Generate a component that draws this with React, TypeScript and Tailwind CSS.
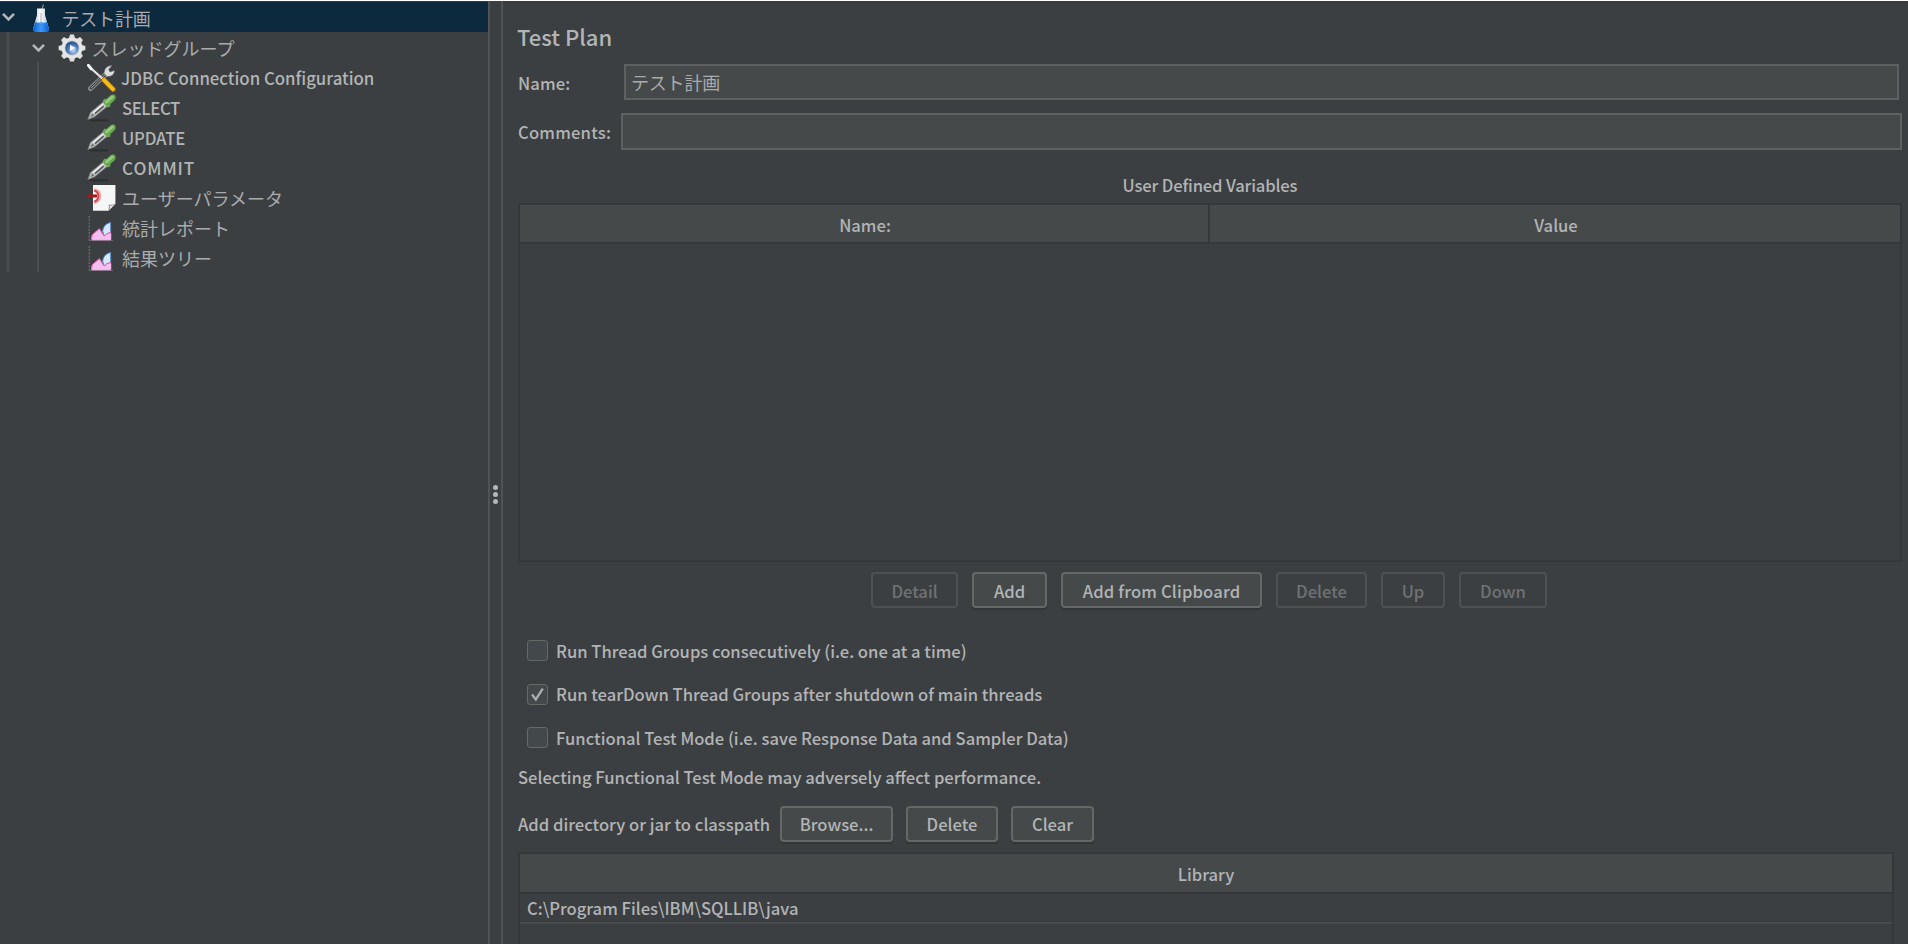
import type { ReactNode } from "react";

const CJK = "font-['Noto_Sans_CJK_JP',sans-serif]";

function Chevron() {
  return (
    <svg width="14" height="10" viewBox="0 0 14 10" className="shrink-0">
      <path d="M1 1.8 L6.5 7.3 L12 1.8" fill="none" stroke="#b4b6b7" strokeWidth="2.6" />
    </svg>
  );
}

function FlaskIcon() {
  return (
    <svg width="18" height="30" viewBox="0 0 18 30" className="shrink-0">
      <defs>
        <linearGradient id="glass" x1="0" x2="1">
          <stop offset="0" stopColor="#a9bac5" />
          <stop offset="0.45" stopColor="#ffffff" />
          <stop offset="1" stopColor="#b3c3ce" />
        </linearGradient>
        <linearGradient id="liquid" x1="0" x2="1">
          <stop offset="0" stopColor="#0b5fd0" />
          <stop offset="0.5" stopColor="#3b9bfb" />
          <stop offset="1" stopColor="#0b5fd0" />
        </linearGradient>
      </defs>
      <path d="M9 10 L11.5 2.5" stroke="#7f8b93" strokeWidth="1.2" />
      <path d="M5 6.5 H13 L13 13 L17 27 Q17 29.5 14.5 29.5 H3.5 Q1 29.5 1 27 L5 13 Z" fill="url(#glass)" />
      <path d="M3.4 20 H14.8 L17 27 Q17 29.7 14.5 29.7 H3.5 Q1 29.7 1 27 Z" fill="url(#liquid)" />
      <path d="M3.8 20 Q9 22 14.4 20" fill="none" stroke="#9cc8f5" strokeWidth="1" />
      <path d="M9 11 V23" stroke="#5f7888" strokeWidth="1" opacity="0.55" />
    </svg>
  );
}

function GearIcon() {
  const teeth = [0, 45, 90, 135, 180, 225, 270, 315];
  return (
    <svg width="28" height="28" viewBox="0 0 28 28" className="shrink-0">
      <defs>
        <radialGradient id="hub" cx="0.6" cy="0.7" r="0.75">
          <stop offset="0" stopColor="#b9d6fa" />
          <stop offset="0.55" stopColor="#4a78bd" />
          <stop offset="1" stopColor="#1d3f7c" />
        </radialGradient>
      </defs>
      {teeth.map((a) => (
        <path key={a} d="M10.8 5 L12 0.6 H16 L17.2 5 Z" fill="#dedfdf" transform={`rotate(${a} 14 14)`} />
      ))}
      <circle cx="14" cy="14" r="10.6" fill="#e4e5e5" />
      <circle cx="14" cy="14" r="7.4" fill="#b3bac4" />
      <circle cx="14" cy="14" r="6.6" fill="url(#hub)" />
      <path d="M12 10.8 L17.6 14 L12 17.2 Z" fill="#f3f7fc" />
    </svg>
  );
}

function ToolsIcon() {
  return (
    <svg width="29" height="28" viewBox="0 0 29 28" className="shrink-0">
      <path d="M3.5 24.5 L19 10" stroke="#8b8d8e" strokeWidth="5" strokeLinecap="round" />
      <path d="M3.8 24.2 L19 10" stroke="#3b3d3e" strokeWidth="2.6" strokeLinecap="round" />
      <path d="M3.8 24.2 L19 10" stroke="#a5a7a8" strokeWidth="0.9" />
      <path
        d="M17 9.5 Q17.5 1.8 25 1.6 L21.6 5.4 L23 8 L27.4 6.4 Q27.5 12.5 20 12.6 Z"
        fill="#dcdddd"
        stroke="#6c6e70"
        strokeWidth="0.6"
      />
      <path d="M2.5 3 L16.5 15.5" stroke="#e4e5e6" strokeWidth="2.2" />
      <path d="M1.4 1.4 L4.2 4.8" stroke="#f5f5f5" strokeWidth="3" strokeLinecap="round" />
      <path d="M17 16 L26 25.2" stroke="#b87b04" strokeWidth="5.2" strokeLinecap="round" />
      <path d="M17 16 L26 25.2" stroke="#f7bd16" strokeWidth="3.6" strokeLinecap="round" />
    </svg>
  );
}

function DropperIcon() {
  return (
    <svg width="29" height="28" viewBox="0 0 29 28" className="shrink-0">
      <ellipse cx="12" cy="26.4" rx="10" ry="1.1" fill="#2c2e30" />
      <path d="M0.8 25.6 L3.4 18.6 L16.6 7.6 L20.8 12 L7.6 22.8 Z" fill="#bfc1c0" stroke="#77797a" strokeWidth="0.8" />
      <path d="M3.4 23 L5.6 19.6 L7.2 21.4 Z" fill="#6a6c6d" />
      <path d="M8 19.6 L16.6 12.2" stroke="#55585a" strokeWidth="1.6" />
      <path d="M6 18.8 L16.4 9.8" stroke="#f0f0f0" strokeWidth="1.2" />
      <path d="M15.4 7.4 L17.2 4.8 L19.4 5 L23.6 1.2 Q26.4 -0.4 28.2 1.6 Q29.4 4 27.6 6.2 L23.4 10 L23.4 12.6 L20.6 13.6 Z" fill="#64a94d" />
      <path d="M19.4 8 L25.4 3" stroke="#97cc80" strokeWidth="2.6" strokeLinecap="round" />
    </svg>
  );
}

function ParamsIcon() {
  return (
    <svg width="29" height="28" viewBox="0 0 29 28" className="shrink-0">
      <path d="M6 1 H28.4 V20 L21.6 26.8 H6 Z" fill="#f6f6f6" />
      <path d="M28.4 19.5 L21 26.8 Q22.5 24 21.6 20.6 Q25 21.4 28.4 19.5 Z" fill="#8e9092" />
      <path d="M23 25 L26.8 21 Q24.6 21.8 22.8 21.6 Z" fill="#e8e8e8" />
      <path d="M7 6 Q12.4 7 12.4 12 Q12.4 17 7 18.6" fill="none" stroke="#eda6a6" strokeWidth="3.6" />
      <path d="M7.4 6.6 Q11.4 8 11.4 12 Q11.4 16 7.4 17.8" fill="none" stroke="#cc4545" strokeWidth="1.8" />
      <path d="M0.5 12 H10" stroke="#a81818" strokeWidth="3" />
    </svg>
  );
}

function ChartIcon() {
  return (
    <svg width="29" height="28" viewBox="0 0 29 28" className="shrink-0">
      <path d="M2.2 2 V26.4" stroke="#77797a" strokeWidth="1" strokeDasharray="2 1.2" />
      <path d="M2 26.4 H26" stroke="#6c6e70" strokeWidth="1" />
      <path d="M23.6 8.6 V21 L18 24 L15.6 17 Q17 9.6 23.6 8.6 Z" fill="#d6e8fc" stroke="#5d8fd0" strokeWidth="1" />
      <path d="M5 25.6 V20.8 L12.4 14.6 L17.2 22 L20 19.6 L23.6 18.4 V25.6 Z" fill="#f6bdf1" stroke="#d8569a" strokeWidth="1" />
      <path d="M5 25.6 V22.4 M23.6 25.6 V19.5 M5 25.6 H23.6" stroke="#f3b5ee" strokeWidth="1.2" />
    </svg>
  );
}

function Item({ icon, children, text = "text-[18px] text-[#a9abac]" }: { icon: ReactNode; children: ReactNode; text?: string }) {
  return (
    <div className="flex h-[30px] items-center gap-[6px] pl-[87px]">
      {icon}
      <span className={text}>{children}</span>
    </div>
  );
}

function Button({ children, className, disabled }: { children: ReactNode; className: string; disabled?: boolean }) {
  const look = disabled
    ? "border-[#4e5152] text-[#6f7273]"
    : "border-[#646867] bg-[#45494a] shadow-[0_2px_1px_#333638]";
  return (
    <button className={`flex h-[36px] shrink-0 items-center justify-center rounded-[4px] border-2 pt-px ${look} ${className}`}>
      {children}
    </button>
  );
}

function Check({ checked, children }: { checked?: boolean; children: ReactNode }) {
  return (
    <label className="flex h-[43.5px] items-center gap-[8px] pl-[9px]">
      <span className="flex h-[21px] w-[21px] items-center justify-center rounded-[3px] border border-[#646867] bg-[#43494a]">
        {checked && (
          <svg width="17" height="17" viewBox="0 0 17 17">
            <path d="M3 8.6 L6.8 13.4 L13.8 2.6" fill="none" stroke="#a9abac" strokeWidth="2.4" />
          </svg>
        )}
      </span>
      <span>{children}</span>
    </label>
  );
}

export default function App() {
  return (
    <div className={`flex h-[944px] w-[1908px] overflow-hidden border-t border-white bg-[#3c3f41] text-[16.6px] leading-6 font-medium whitespace-nowrap text-[#b2b4b5] ${CJK}`}>
      <aside className="w-[488px] shrink-0 border-t border-[#35393b] font-normal">
        <div className="flex h-[30px] items-center bg-[#0d293e] pl-[1.5px]">
          <Chevron />
          <span className="ml-[16px]"><FlaskIcon /></span>
          <span className="ml-[12px] pt-px text-[18px] tracking-[-0.2px] text-[#a9abac]">テスト計画</span>
        </div>
        <div className="ml-[7px] h-[240px] border-l-2 border-[#4b4e4f] pt-px">
          <div className="-ml-[9px] flex h-[29px] items-center pl-[31.5px]">
            <Chevron />
            <span className="ml-[12px]"><GearIcon /></span>
            <span className="ml-[6px] text-[18px] text-[#a9abac]">スレッドグループ</span>
          </div>
          <div className="ml-[28px] h-[210px] border-l-2 border-[#4b4e4f] pt-px">
            <div className="-ml-[39px]">
              <Item icon={<ToolsIcon />} text="-ml-px text-[16.8px] font-medium">JDBC Connection Configuration</Item>
              <Item icon={<DropperIcon />} text="text-[16.8px] font-medium tracking-[-0.45px]">SELECT</Item>
              <Item icon={<DropperIcon />} text="text-[16.8px] font-medium tracking-[-0.2px]">UPDATE</Item>
              <Item icon={<DropperIcon />} text="text-[17.2px] font-medium tracking-[0.9px]">COMMIT</Item>
              <Item icon={<ParamsIcon />}>ユーザーパラメータ</Item>
              <Item icon={<ChartIcon />}>統計レポート</Item>
              <Item icon={<ChartIcon />}>結果ツリー</Item>
            </div>
          </div>
        </div>
      </aside>

      <div className="flex w-[15px] shrink-0 flex-col items-center gap-[2px] border-x-2 border-[#505354] pt-[484px]">
        <i className="h-[5px] w-[5px] rounded-full bg-[#b4b6b7]" />
        <i className="h-[5px] w-[5px] rounded-full bg-[#b4b6b7]" />
        <i className="h-[5px] w-[5px] rounded-full bg-[#b4b6b7]" />
      </div>

      <main className="flex min-w-0 flex-1 flex-col border-t border-[#35393b] pl-[15px] [&>*]:shrink-0">
        <h1 className="mt-[19px] -ml-px h-[31px] text-[22px] leading-[30px]">Test Plan</h1>
        <div className="mt-[12px] flex h-[36px] items-center">
          <span className="w-[106px] pt-px tracking-[0.15px]">Name:</span>
          <div className="flex h-[36px] w-[1275px] items-center border-2 border-[#5e6161] bg-[#45494a] pl-[5px] text-[18px] font-normal tracking-[-0.2px] text-[#a9abac]">
            テスト計画
          </div>
        </div>
        <div className="mt-[13px] flex h-[37px] items-center">
          <span className="w-[103px] tracking-[0.2px]">Comments:</span>
          <div className="h-[37px] w-[1281px] border-2 border-[#5e6161] bg-[#45494a]" />
        </div>

        <div className="mt-[23px] w-[1384px] text-center tracking-[-0.15px]">User Defined Variables</div>
        <div className="mt-[6px] flex h-[359px] w-[1384px] flex-col border-2 border-[#34383a]">
          <div className="grid h-[39px] grid-cols-2 border-b-2 border-[#34383a] bg-[#45494a] text-center leading-[40px]">
            <div className="h-[37px] border-r-2 border-[#36393b] pl-[2px]">Name:</div>
            <div className="pl-[2px]">Value</div>
          </div>
        </div>

        <div className="mt-[10px] flex gap-[14px] pl-[353px]">
          <Button className="w-[87px]" disabled>Detail</Button>
          <Button className="w-[75px]">Add</Button>
          <Button className="w-[201px] tracking-[0.15px]">Add from Clipboard</Button>
          <Button className="w-[91px]" disabled>Delete</Button>
          <Button className="w-[64px]" disabled>Up</Button>
          <Button className="w-[88px]" disabled>Down</Button>
        </div>

        <div className="mt-[21px]">
          <Check>Run Thread Groups consecutively (i.e. one at a time)</Check>
          <Check checked>Run tearDown Thread Groups after shutdown of main threads</Check>
          <Check>Functional Test Mode (i.e. save Response Data and Sampler Data)</Check>
        </div>
        <div className="mt-[5px] h-6">Selecting Functional Test Mode may adversely affect performance.</div>

        <div className="mt-[17px] flex h-[36px] items-center">
          <span className="w-[262px]">Add directory or jar to classpath</span>
          <Button className="w-[113px]">Browse...</Button>
          <Button className="ml-[13px] w-[92px]">Delete</Button>
          <Button className="ml-[13px] w-[83px]">Clear</Button>
        </div>

        <div className="mt-[10px] h-[100px] w-[1376px] border-x-2 border-t-2 border-[#34383a]">
          <div className="h-[40px] border-b-2 border-[#35383a] bg-[#45494a] text-center leading-[41px]">Library</div>
          <div className="h-[30px] border-b-2 border-[#474a4b] pl-[7px] leading-[28px]">C:\Program Files\IBM\SQLLIB\java</div>
        </div>
      </main>
    </div>
  );
}
